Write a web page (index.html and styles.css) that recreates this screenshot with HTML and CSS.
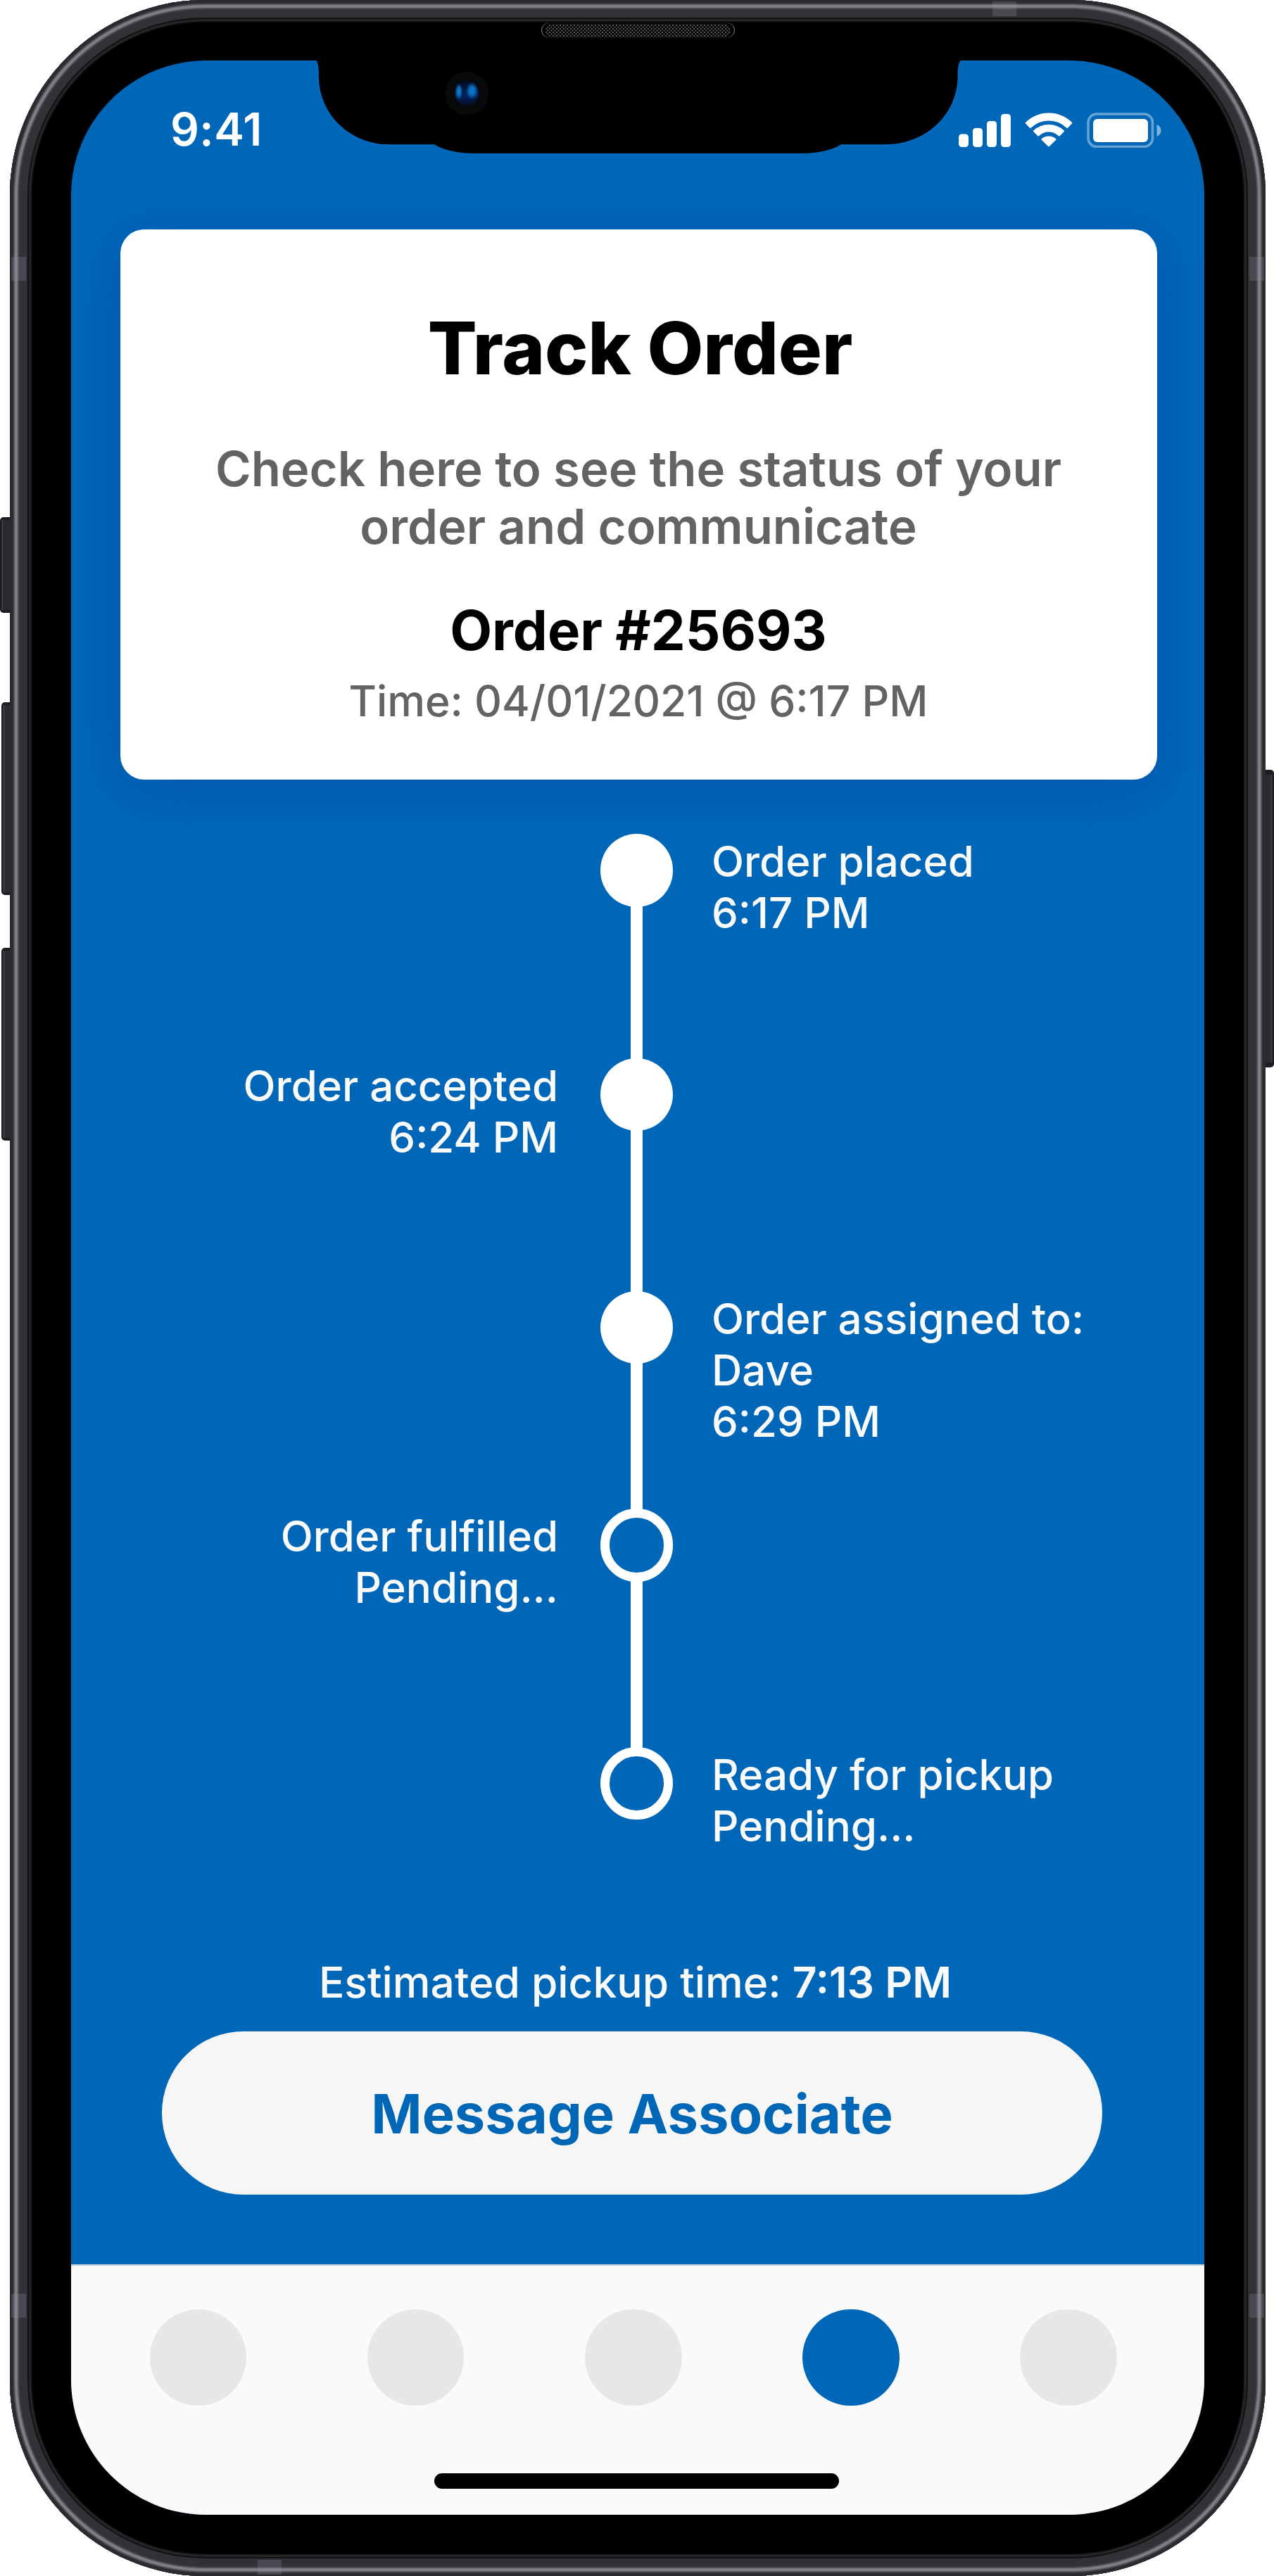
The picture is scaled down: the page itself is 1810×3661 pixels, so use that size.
FILE: index.html
```
<!DOCTYPE html>
<html lang="en">
<head>
<meta charset="utf-8">
<title>Track Order</title>
<link rel="stylesheet" href="styles.css">
</head>
<body>
<div class="stage">
  <span class="key key-mute"></span>
  <span class="key key-up"></span>
  <span class="key key-down"></span>
  <span class="key key-power"></span>

  <div class="phone">
    <span class="band band-left band-upper"></span>
    <span class="band band-left band-lower"></span>
    <span class="band band-right band-upper"></span>
    <span class="band band-right band-lower"></span>
    <span class="band band-top"></span>
    <span class="band band-bottom"></span>

    <div class="screen">
      <header class="status">
        <span class="clock">9:41</span>
        <div class="indicators">
          <svg width="74" height="50" viewBox="0 0 74 50" fill="#fff">
            <rect x="0" y="30.5" width="14" height="18.5" rx="4.5"/>
            <rect x="20" y="22" width="14" height="27" rx="4.5"/>
            <rect x="40" y="12" width="14" height="37" rx="4.5"/>
            <rect x="60" y="2" width="14" height="47" rx="4.5"/>
          </svg>
          <svg width="68" height="50" viewBox="0 0 68 50" fill="#fff">
            <path d="M1 15.6Q.2 14.8 1 14Q15 .5 34 .5T67 14Q67.800 14.800 67 15.600L61 21.800Q60.200 22.500 59.400 21.800Q48.500 11.500 34 11.500T8.600 21.800Q7.800 22.500 7 21.800Z"/>
            <path d="M12.300 27.100Q11.500 26.300 12.300 25.500Q21.500 17 34 17T55.700 25.500Q56.500 26.300 55.700 27.100L49.600 33.200Q48.800 33.900 48 33.200Q42 27.500 34 27.500T20 33.200Q19.200 33.900 18.400 33.200Z"/>
            <path d="M23.700 38.800Q22.900 38 23.800 37.300Q28 33.500 34 33.500T44.200 37.300Q45.100 38 44.300 38.800L34.800 47.900Q34 48.600 33.200 47.900Z"/>
          </svg>
          <svg width="106" height="50" viewBox="0 0 106 50" fill="#fff">
            <rect x="2" y="2" width="91.500" height="46.500" rx="12" fill="none" stroke="#fff" stroke-width="3.500" opacity=".4"/>
            <rect x="9" y="9" width="78" height="33" rx="6"/>
            <path d="M99.500 17Q105.500 19.500 105.500 25.500T99.500 34Z" opacity=".5"/>
          </svg>
        </div>
      </header>

      <section class="card">
        <h1 class="title">Track Order</h1>
        <p class="intro">Check here to see the status of your<br>order and communicate</p>
        <h2 class="order">Order #25693</h2>
        <p class="time">Time: 04/01/2021 @ 6:17 PM</p>
      </section>

      <ol class="timeline">
        <li class="step step-placed">
          <div class="marker"><span class="dot"></span><span class="link"></span></div>
          <p class="label">Order placed<br>6:17 PM</p>
        </li>
        <li class="step step-accepted flip">
          <div class="marker"><span class="dot"></span><span class="link"></span></div>
          <p class="label">Order accepted<br>6:24 PM</p>
        </li>
        <li class="step step-assigned">
          <div class="marker"><span class="dot"></span><span class="link"></span></div>
          <p class="label">Order assigned to:<br>Dave<br>6:29 PM</p>
        </li>
        <li class="step step-fulfilled flip">
          <div class="marker"><span class="dot ring"></span><span class="link"></span></div>
          <p class="label">Order fulfilled<br>Pending...</p>
        </li>
        <li class="step step-ready">
          <div class="marker"><span class="dot ring"></span></div>
          <p class="label">Ready for pickup<br>Pending...</p>
        </li>
      </ol>

      <p class="estimate">Estimated pickup time: <b>7:13 PM</b></p>
      <button class="message" type="button">Message Associate</button>

      <footer class="tabbar">
        <nav class="tabs">
          <span class="tab"></span>
          <span class="tab"></span>
          <span class="tab"></span>
          <span class="tab active"></span>
          <span class="tab"></span>
        </nav>
        <span class="home"></span>
      </footer>
    </div>

    <svg class="notch" width="940" height="200" viewBox="440 28 940 200">
      <defs>
        <pattern id="mesh" width="5" height="5" patternUnits="userSpaceOnUse">
          <rect x="0" y="0" width="1.900" height="1.900" fill="#666"/>
          <rect x="2.500" y="2.500" width="1.900" height="1.900" fill="#666"/>
        </pattern>
        <linearGradient id="rim" x1="0" x2="1">
          <stop offset="0" stop-color="#888"/>
          <stop offset=".04" stop-color="#0a0a0a"/>
          <stop offset=".96" stop-color="#0a0a0a"/>
          <stop offset="1" stop-color="#888"/>
        </linearGradient>
        <linearGradient id="lens" x1="0" y1="0" x2="0" y2="1">
          <stop offset="0" stop-color="#020a20"/>
          <stop offset=".6" stop-color="#03245a"/>
          <stop offset="1" stop-color="#020c30"/>
        </linearGradient>
        <radialGradient id="glint">
          <stop offset="0" stop-color="#0a80d4"/>
          <stop offset=".5" stop-color="#0a66b4"/>
          <stop offset="1" stop-color="#0a4f94" stop-opacity="0"/>
        </radialGradient>
      </defs>
      <path fill="#000" stroke="#0070cf" stroke-width="1.500" d="M448 85Q452 91 452 103V108C452 166 500 206 552 206H1260C1314 206 1361.500 164 1361.500 108V103Q1361.500 91 1366 85Z"/>
      <path fill="#000" d="M440 60H1380V86H440ZM610 200L618 206Q640 218 675 218H1138Q1172 218 1194 206L1202 200Z"/>
      <rect x="769.500" y="32.500" width="274" height="21" rx="10.500" fill="#030303" stroke="url(#rim)"/>
      <rect x="775" y="34" width="263" height="19" rx="9.500" fill="url(#mesh)"/>
      <circle cx="663.300" cy="132.700" r="31" fill="#08090b"/>
      <circle cx="663.300" cy="132.300" r="17" fill="url(#lens)"/>
      <ellipse cx="652" cy="130" rx="5.500" ry="12" fill="url(#glint)"/>
      <ellipse cx="670.500" cy="129" rx="9" ry="12.500" fill="url(#glint)"/>
    </svg>
  </div>
</div>
</body>
</html>
```
FILE: styles.css
```
* {
  box-sizing: border-box;
}

body,
h1,
h2,
p,
ol {
  margin: 0;
  padding: 0;
}

body {
  background: #fff;
  font-family: Inter, "Liberation Sans", sans-serif;
}

.stage {
  position: relative;
  width: 1810px;
  height: 3661px;
  padding: 0 12px 0 14px;
  overflow: hidden;
}

/* Side keys */
.key {
  position: absolute;
  width: 20px;
  background: linear-gradient(90deg, #1c1b1f 0 2px, #47464c 3px, #2b2a2e 5px, #29282c 100%);
  border: solid #1e1d21;
  border-width: 4px 0;
  border-radius: 5px 0 0 5px;
}

.key-mute {
  left: 0;
  top: 735px;
  height: 136px;
}

.key-up {
  left: 2px;
  top: 998px;
  height: 274px;
}

.key-down {
  left: 2px;
  top: 1347px;
  height: 274px;
}

.key-power {
  right: 0;
  top: 1094px;
  height: 423px;
  border-width: 7px 0;
  transform: scaleX(-1);
}

/* Metal frame and bezel, as concentric rings */
.phone {
  position: relative;
  width: 1784px;
  height: 3661px;
  padding: 86px 87px 87px;
  border-radius: 278px;
  background: #000;
  box-shadow:
    inset 0 0 0 4px #2b2a2f,
    inset 0 0 0 5px #343338,
    inset 0 0 0 6px #47464c,
    inset 0 0 0 7px #626167,
    inset 0 0 0 8px #77767c,
    inset 0 0 0 10px #828187,
    inset 0 0 0 11px #737278,
    inset 0 0 0 12px #5a595f,
    inset 0 0 0 13px #444349,
    inset 0 0 0 14px #38373d,
    inset 0 0 0 25px #323137,
    inset 0 0 0 27px #111,
    inset 0 0 0 30px #262626,
    inset 0 0 0 31px #141414,
    inset 0 0 0 32px #080808;
}

.band {
  position: absolute;
  background: rgba(150, 145, 165, .25);
}

.band-left,
.band-right {
  width: 21px;
  height: 34px;
}

.band-left {
  left: 2px;
}

.band-right {
  right: 2px;
}

.band-upper {
  top: 365px;
}

.band-lower {
  top: 3260px;
}

.band-top,
.band-bottom {
  width: 34px;
  height: 21px;
}

.band-top {
  left: 1396px;
  top: 2px;
}

.band-bottom {
  left: 352px;
  bottom: 2px;
}

.notch {
  position: absolute;
  left: 426px;
  top: 28px;
}

.screen {
  display: flex;
  flex-direction: column;
  width: 1610px;
  height: 3488px;
  overflow: hidden;
  border-radius: 192px;
  background: #0067b8;
}

/* Status bar */
.status {
  display: flex;
  flex: none;
  justify-content: space-between;
  align-items: flex-start;
  height: 240px;
  padding: 59px 61.5px 0 141px;
}

.clock {
  color: #fff;
  font-size: 64px;
  font-weight: 600;
  line-height: 78px;
  letter-spacing: .4px;
}

.indicators {
  display: flex;
  gap: 20px;
  padding-top: 14.5px;
}

/* Order summary */
.card {
  flex: none;
  width: 1473px;
  height: 782px;
  margin-left: 69.5px;
  padding-top: 105.5px;
  border-radius: 34px;
  background: #fff;
  box-shadow: 0 16px 80px rgba(0, 50, 150, .3);
  text-align: center;
}

.title {
  padding-left: 5px;
  color: #000;
  font-size: 103.4px;
  font-weight: 800;
  line-height: 126px;
}

.intro {
  margin-top: 68.5px;
  color: #636363;
  font-size: 68.9px;
  font-weight: 600;
  line-height: 81.5px;
}

.order {
  margin-top: 59.5px;
  color: #000;
  font-size: 77.8px;
  font-weight: 700;
  line-height: 94px;
}

.time {
  margin-top: 17.5px;
  color: #636363;
  font-size: 60.5px;
  font-weight: 500;
  line-height: 73px;
}

/* Progress timeline */
.timeline {
  flex: none;
  height: 1596px;
  padding-top: 77px;
  list-style: none;
}

.step {
  display: grid;
  grid-template-columns: 751.5px 103.5px 1fr;
}

.step-placed {
  height: 318.5px;
}

.step-accepted {
  height: 331px;
}

.step-assigned {
  height: 309.5px;
}

.step-fulfilled {
  height: 338.5px;
}

.step-ready {
  height: 221px;
}

.marker {
  grid-column: 2;
  grid-row: 1;
  display: flex;
  flex-direction: column;
  align-items: center;
}

.dot {
  flex: none;
  width: 103.5px;
  height: 103.5px;
  border-radius: 50%;
  background: #fff;
}

.ring {
  border: 13px solid #fff;
  background: transparent;
}

.link {
  flex: 1;
  width: 17.5px;
  margin: -2px 0;
  background: #fff;
}

.label {
  grid-column: 3;
  grid-row: 1;
  padding: 3px 0 0 55px;
  color: #fafafa;
  font-size: 60px;
  font-weight: 500;
  line-height: 73px;
}

.flip .label {
  grid-column: 1;
  padding: 3px 59.5px 0 0;
  text-align: right;
}

/* Pickup estimate and action */
.estimate {
  flex: none;
  margin-top: 77px;
  padding-right: 7px;
  color: #fafafa;
  font-size: 60.5px;
  font-weight: 500;
  line-height: 73px;
  text-align: center;
}

.estimate b {
  font-weight: 600;
}

.message {
  flex: none;
  width: 1336px;
  height: 232px;
  margin: 32.500px 0 0 129px;
  padding: 2px 0 0;
  border: 0;
  border-radius: 116px;
  background: #f6f6f6;
  color: #0066b6;
  font-family: inherit;
  font-size: 77.6px;
  font-weight: 700;
  line-height: 94px;
}

/* Tab bar */
.tabbar {
  flex: none;
  height: 356px;
  margin-top: auto;
  padding-top: 61.5px;
  border-top: 2px solid #c3ccd8;
  background: #fafafa;
}

.tabs {
  display: flex;
  gap: 171.7px;
  padding-left: 112px;
}

.tab {
  width: 137.400px;
  height: 137.400px;
  border-radius: 50%;
  background: #e7e7e7;
}

.active {
  background: #0067b8;
}

.home {
  display: block;
  width: 575px;
  height: 22px;
  margin: 96.500px 0 0 516px;
  border-radius: 11px;
  background: #000;
}
```
